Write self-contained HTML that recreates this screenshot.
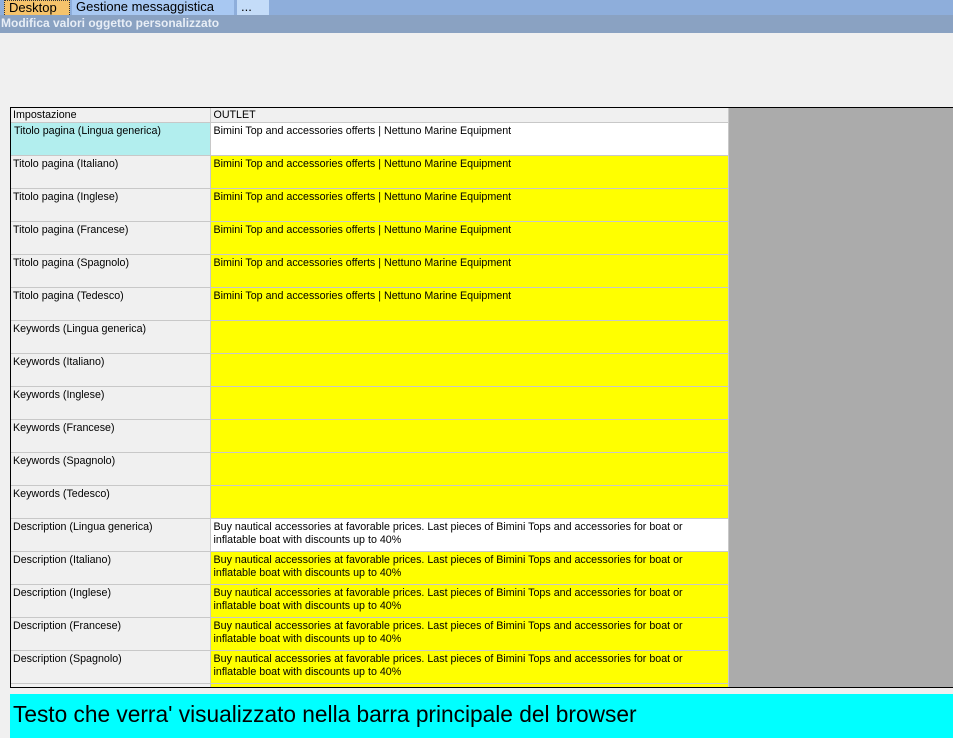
<!DOCTYPE html>
<html><head><meta charset="utf-8"><style>
*{margin:0;padding:0;box-sizing:border-box}
body{width:953px;height:738px;overflow:hidden;background:#f0f0f0;font-family:"Liberation Sans","DejaVu Sans",sans-serif;position:relative}
#tabs{position:absolute;left:0;top:0;width:953px;height:15px;background:#8eaedb}
.tab{position:absolute;top:0;height:15px;font-size:13px;line-height:14px;color:#000;padding-left:4px}
#t1{left:4px;width:66px;background:#f5c36b;border:1px dotted #333;border-bottom:none}
#t2{left:72px;width:162px;background:#a8c8f2}
#t3{left:237px;width:32px;background:#c4dcf8}
#title{position:absolute;left:0;top:15px;width:953px;height:18px;background:#8aa2c2;color:#e8eef6;font-weight:bold;font-size:12px;line-height:17px;padding-left:1px}
#grid{position:absolute;left:10px;top:107px;width:943px;height:581px;border:1px solid #000;border-right:none;background:#ababab;overflow:hidden}
table{border-collapse:collapse;table-layout:fixed;width:718px;font-size:10.7px}
td{vertical-align:top;padding:2px 2px 2px 3px;border-right:1px solid #c8c8c8;border-bottom:1px solid #c8c8c8;line-height:13px;color:#000;height:33px;overflow:hidden}
td.l{padding-left:2px}
tr.h td{height:14px;padding-top:0;padding-bottom:0;line-height:14px;background:#f0f0f0;border-bottom:1px solid #c8c8c8}
td.l{background:#f0f0f0;width:199px}
td.y{background:#ffff00}
td.w{background:#fff}
td.c{background:#b2eeee}
#bottom{position:absolute;left:10px;top:694px;width:943px;height:44px;background:#00ffff;font-size:22.7px;line-height:40px;padding-left:3px;color:#000}
</style></head><body>
<div id="tabs">
<div class="tab" id="t1">Desktop</div>
<div class="tab" id="t2">Gestione messaggistica</div>
<div class="tab" id="t3">...</div>
</div>
<div id="title">Modifica valori oggetto personalizzato</div>
<div id="grid"><table>
<tr class="h"><td class="l">Impostazione</td><td>OUTLET</td></tr>
<tr><td class="c">Titolo pagina (Lingua generica)</td><td class="w">Bimini Top and accessories offerts | Nettuno Marine Equipment</td></tr>
<tr><td class="l">Titolo pagina (Italiano)</td><td class="y">Bimini Top and accessories offerts | Nettuno Marine Equipment</td></tr>
<tr><td class="l">Titolo pagina (Inglese)</td><td class="y">Bimini Top and accessories offerts | Nettuno Marine Equipment</td></tr>
<tr><td class="l">Titolo pagina (Francese)</td><td class="y">Bimini Top and accessories offerts | Nettuno Marine Equipment</td></tr>
<tr><td class="l">Titolo pagina (Spagnolo)</td><td class="y">Bimini Top and accessories offerts | Nettuno Marine Equipment</td></tr>
<tr><td class="l">Titolo pagina (Tedesco)</td><td class="y">Bimini Top and accessories offerts | Nettuno Marine Equipment</td></tr>
<tr><td class="l">Keywords (Lingua generica)</td><td class="y"></td></tr>
<tr><td class="l">Keywords (Italiano)</td><td class="y"></td></tr>
<tr><td class="l">Keywords (Inglese)</td><td class="y"></td></tr>
<tr><td class="l">Keywords (Francese)</td><td class="y"></td></tr>
<tr><td class="l">Keywords (Spagnolo)</td><td class="y"></td></tr>
<tr><td class="l">Keywords (Tedesco)</td><td class="y"></td></tr>
<tr><td class="l">Description (Lingua generica)</td><td class="w">Buy nautical accessories at favorable prices. Last pieces of Bimini Tops and accessories for boat or inflatable boat with discounts up to 40%</td></tr>
<tr><td class="l">Description (Italiano)</td><td class="y">Buy nautical accessories at favorable prices. Last pieces of Bimini Tops and accessories for boat or inflatable boat with discounts up to 40%</td></tr>
<tr><td class="l">Description (Inglese)</td><td class="y">Buy nautical accessories at favorable prices. Last pieces of Bimini Tops and accessories for boat or inflatable boat with discounts up to 40%</td></tr>
<tr><td class="l">Description (Francese)</td><td class="y">Buy nautical accessories at favorable prices. Last pieces of Bimini Tops and accessories for boat or inflatable boat with discounts up to 40%</td></tr>
<tr><td class="l">Description (Spagnolo)</td><td class="y">Buy nautical accessories at favorable prices. Last pieces of Bimini Tops and accessories for boat or inflatable boat with discounts up to 40%</td></tr>
<tr><td class="l">Description (Tedesco)</td><td class="y">Buy nautical accessories at favorable prices. Last pieces of Bimini Tops and accessories for boat or inflatable boat with discounts up to 40%</td></tr>
</table></div>
<div id="bottom">Testo che verra' visualizzato nella barra principale del browser</div>
</body></html>
